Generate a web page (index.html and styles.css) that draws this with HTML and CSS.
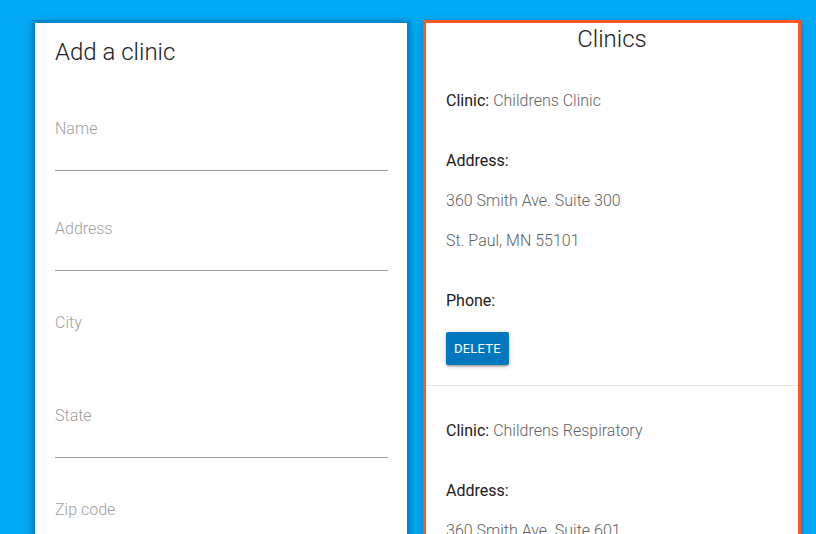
FILE: index.html
```html
<!DOCTYPE html>
<html lang="en">
<head>
<meta charset="utf-8">
<title>Clinics</title>
<link rel="stylesheet" href="styles.css">
</head>
<body>
<main class="page">
  <section class="card card-form">
    <h2 class="card-title">Add a clinic</h2>
    <form class="clinic-form">
      <div class="field field-first">
        <label class="field-label" for="name">Name</label>
        <input class="field-input" id="name" type="text">
      </div>
      <div class="field">
        <label class="field-label" for="address">Address</label>
        <input class="field-input" id="address" type="text">
      </div>
      <div class="field">
        <label class="field-label" for="city">City</label>
        <input class="field-input field-input-plain" id="city" type="text">
      </div>
      <div class="field">
        <label class="field-label" for="state">State</label>
        <input class="field-input" id="state" type="text">
      </div>
      <div class="field">
        <label class="field-label" for="zip">Zip code</label>
        <input class="field-input" id="zip" type="text">
      </div>
    </form>
  </section>
  <section class="card card-list">
    <h2 class="card-title card-title-center">Clinics</h2>
    <ul class="clinic-list">
      <li class="clinic">
        <p class="row"><span class="key">Clinic:</span> <span class="val">Childrens Clinic</span></p>
        <p class="row row-gap"><span class="key">Address:</span></p>
        <p class="row val">360 Smith Ave. Suite 300</p>
        <p class="row val">St. Paul, MN 55101</p>
        <p class="row row-gap"><span class="key">Phone:</span></p>
        <button class="btn" type="button">Delete</button>
      </li>
      <li class="clinic">
        <p class="row"><span class="key">Clinic:</span> <span class="val">Childrens Respiratory</span></p>
        <p class="row row-gap"><span class="key">Address:</span></p>
        <p class="row val">360 Smith Ave. Suite 601</p>
        <p class="row val">St. Paul, MN 55101</p>
        <p class="row row-gap"><span class="key">Phone:</span></p>
        <button class="btn" type="button">Delete</button>
      </li>
    </ul>
  </section>
</main>
</body>
</html>
```
FILE: styles.css
```css
html, body {
  margin: 0;
  padding: 0;
}
body {
  background: #03a9f4;
  font-family: Roboto, "Noto Sans", "Liberation Sans", sans-serif;
  font-size: 16px;
  color: #212121;
}
.page {
  display: flex;
  align-items: flex-start;
  gap: 13px;
  padding: 20px 0 40px 32px;
}
.card {
  width: 378px;
  box-sizing: border-box;
  background: #fff;
  border: 3px solid #0288d1;
  box-shadow: 0 2px 5px rgba(0,0,0,0.16), 0 2px 10px rgba(0,0,0,0.12);
}
.card-list {
  border-color: #ff5722;
}
.card-form {
  padding: 0 19px 30px 20px;
}
.card-title {
  margin: 0;
  font-size: 24px;
  line-height: 32px;
  font-weight: 300;
  color: #212121;
}
.card-form .card-title {
  margin-top: 13px;
  margin-bottom: 49px;
}
.card-title-center {
  text-align: center;
}
.clinic-form {
  display: flex;
  flex-direction: column;
}
.field {
  display: flex;
  flex-direction: column;
  margin-bottom: 39.5px;
}
.field-first {
  margin-bottom: 46px;
}
.field-label {
  font-size: 16px;
  line-height: 24px;
  font-weight: 300;
  color: #9e9e9e;
}
.field-input {
  height: 29px;
  border: none;
  border-bottom: 1px solid #9e9e9e;
  padding: 0;
  margin: 0;
  outline: none;
  background: transparent;
  font: inherit;
}
.field-input-plain {
  border-bottom-color: transparent;
}
.clinic-list {
  list-style: none;
  margin: 0;
  padding: 0;
}
.clinic {
  display: flex;
  flex-direction: column;
  align-items: flex-start;
  padding: 33.5px 20px 20px;
  border-bottom: 1px solid #e0e0e0;
}
.row {
  margin: 16px 0 0;
  line-height: 24px;
  font-size: 16px;
}
.clinic .row:first-child {
  margin-top: 0;
}
.row-gap {
  margin-top: 36px;
}
.key {
  font-weight: 400;
  color: #1a1a1a;
}
.val {
  font-weight: 300;
  color: #5f5f5f;
}
.btn {
  margin-top: 19px;
  height: 33px;
  padding: 0 8px;
  border: none;
  border-radius: 2px;
  background: #0277bd;
  color: #fff;
  font-family: Roboto, "Noto Sans", sans-serif;
  font-size: 13px;
  font-weight: 400;
  letter-spacing: 0.2px;
  text-transform: uppercase;
  box-shadow: 0 2px 2px 0 rgba(0,0,0,0.14), 0 3px 1px -2px rgba(0,0,0,0.12), 0 1px 5px 0 rgba(0,0,0,0.2);
}
```
